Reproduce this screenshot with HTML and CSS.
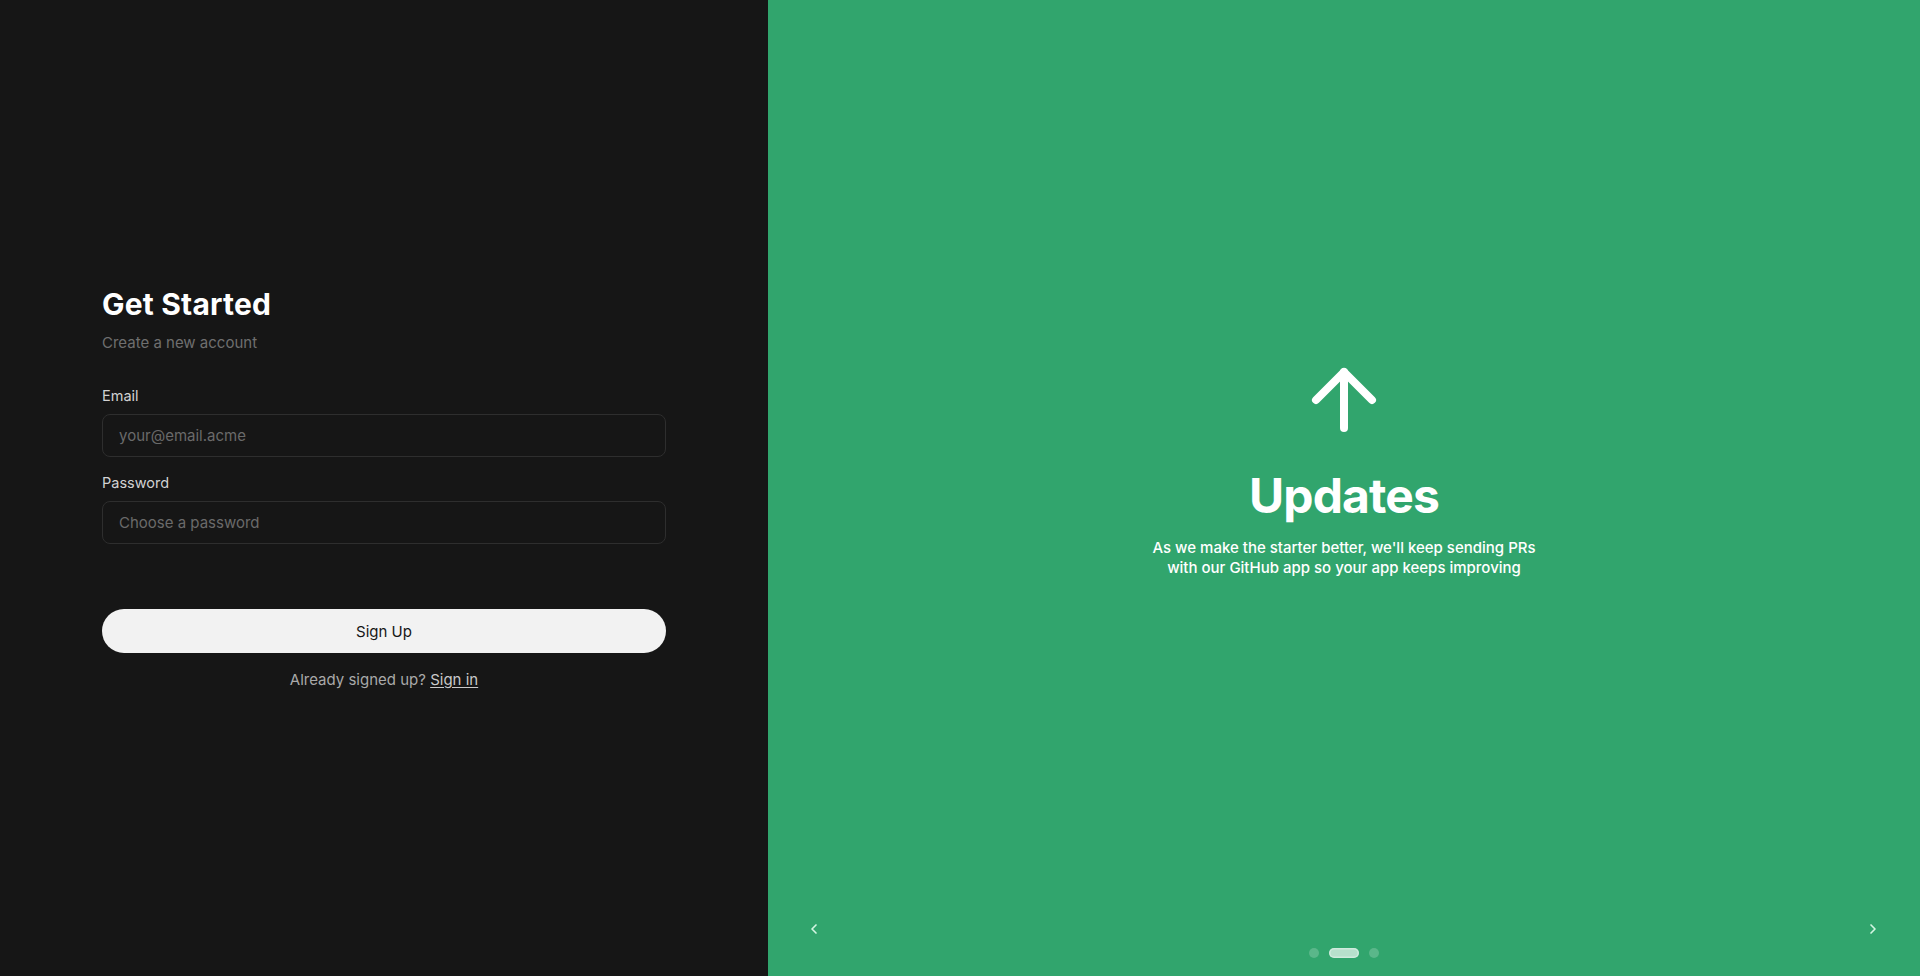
FILE: index.html
```html
<!DOCTYPE html>
<html lang="en">
<head>
<meta charset="utf-8">
<title>Get Started</title>
<link rel="stylesheet" href="styles.css">
</head>
<body>
<main class="page">
  <section class="auth">
    <div class="auth-inner">
      <h1 class="auth-title">Get Started</h1>
      <p class="auth-subtitle">Create a new account</p>
      <form class="auth-form">
        <label class="field-label" for="email">Email</label>
        <input class="field-input" id="email" type="email" placeholder="your@email.acme">
        <label class="field-label field-label-2" for="password">Password</label>
        <input class="field-input" id="password" type="password" placeholder="Choose a password">
        <button class="submit" type="button">Sign Up</button>
      </form>
      <p class="auth-alt">Already signed up? <a class="auth-link" href="#">Sign in</a></p>
    </div>
  </section>
  <section class="showcase">
    <div class="slide">
      <svg class="slide-icon" width="96" height="96" viewBox="0 0 24 24" fill="none" stroke="currentColor" stroke-width="2" stroke-linecap="round" stroke-linejoin="round">
        <path d="m5 12 7-7 7 7"/>
        <path d="M12 19V5"/>
      </svg>
      <h2 class="slide-title">Updates</h2>
      <p class="slide-text">As we make the starter better, we'll keep sending PRs with our GitHub app so your app keeps improving</p>
    </div>
    <div class="dots">
      <span class="dot"></span>
      <span class="dot dot-active"></span>
      <span class="dot"></span>
    </div>
    <button class="nav nav-prev" type="button" aria-label="Previous">
      <svg width="16" height="16" viewBox="0 0 24 24" fill="none" stroke="currentColor" stroke-width="2.5" stroke-linecap="round" stroke-linejoin="round"><path d="m15 18-6-6 6-6"/></svg>
    </button>
    <button class="nav nav-next" type="button" aria-label="Next">
      <svg width="16" height="16" viewBox="0 0 24 24" fill="none" stroke="currentColor" stroke-width="2.5" stroke-linecap="round" stroke-linejoin="round"><path d="m9 18 6-6-6-6"/></svg>
    </button>
  </section>
</main>
</body>
</html>
```

FILE: styles.css
```css
* { box-sizing: border-box; }

html, body {
  margin: 0;
  padding: 0;
  height: 100%;
}

body {
  font-family: Inter, "Noto Sans", "Liberation Sans", sans-serif;
  background: #161616;
  color: #ededed;
}

.page {
  display: flex;
  height: 976px;
  width: 100%;
}

.auth {
  width: 768px;
  flex: 0 0 768px;
  background: #161616;
  display: flex;
  align-items: center;
  justify-content: center;
}

.auth-inner {
  width: 564px;
  display: flex;
  flex-direction: column;
}

.auth-title {
  margin: 0;
  font-size: 30px;
  line-height: 36px;
  font-weight: 700;
  color: #ffffff;
  letter-spacing: 0.2px;
}

.auth-subtitle {
  margin: 11px 0 0;
  font-size: 15px;
  line-height: 20px;
  color: #6f6f6f;
}

.auth-form {
  margin-top: 33px;
  display: flex;
  flex-direction: column;
}

.field-label {
  font-size: 14.5px;
  line-height: 20px;
  color: #d2d2d2;
  font-weight: 400;
}

.field-label-2 {
  margin-top: 16px;
}

.field-input {
  margin-top: 8px;
  height: 43px;
  width: 100%;
  padding: 0 16px;
  background: #161616;
  border: 1px solid #2e2e2e;
  border-radius: 8px;
  font-family: inherit;
  font-size: 15px;
  color: #ededed;
  outline: none;
}

.field-input::placeholder {
  color: #6a6a6a;
}

.submit {
  margin-top: 65px;
  height: 44px;
  width: 100%;
  border: none;
  border-radius: 999px;
  background: #f2f2f2;
  color: #161616;
  font-family: inherit;
  font-size: 15px;
  font-weight: 400;
  cursor: pointer;
}

.auth-alt {
  margin: 17px 0 0;
  text-align: center;
  font-size: 15px;
  line-height: 20px;
  color: #a9a9a9;
}

.auth-link {
  color: #c9c9c9;
  text-decoration: underline;
  text-underline-offset: 2px;
}

.showcase {
  position: relative;
  flex: 1;
  background: #31a56d;
  color: #ffffff;
  display: flex;
  flex-direction: column;
}

.slide {
  flex: 1;
  display: flex;
  flex-direction: column;
  align-items: center;
  justify-content: center;
  text-align: center;
}

.slide-icon {
  display: block;
  color: #ffffff;
}

.slide-title {
  margin: 24px 0 0;
  font-size: 48px;
  line-height: 48px;
  font-weight: 700;
  letter-spacing: -0.9px;
}

.slide-text {
  margin: 18px 0 0;
  max-width: 400px;
  font-size: 15px;
  line-height: 20px;
  font-weight: 500;
}

.dots {
  height: 47px;
  display: flex;
  align-items: center;
  justify-content: center;
  gap: 10px;
}

.dot {
  width: 10px;
  height: 10px;
  border-radius: 50%;
  background: rgba(255, 255, 255, 0.2);
}

.dot-active {
  width: 30px;
  border-radius: 999px;
  background: rgba(255, 255, 255, 0.65);
  box-shadow: inset 0 0 0 1.5px rgba(255, 255, 255, 0.35);
}

.nav {
  position: absolute;
  top: 921px;
  width: 16px;
  height: 16px;
  padding: 0;
  border: none;
  background: transparent;
  color: rgba(230, 255, 240, 0.9);
  display: flex;
  align-items: center;
  justify-content: center;
  cursor: pointer;
}

.nav-prev { left: 38px; }
.nav-next { right: 39px; }
```
